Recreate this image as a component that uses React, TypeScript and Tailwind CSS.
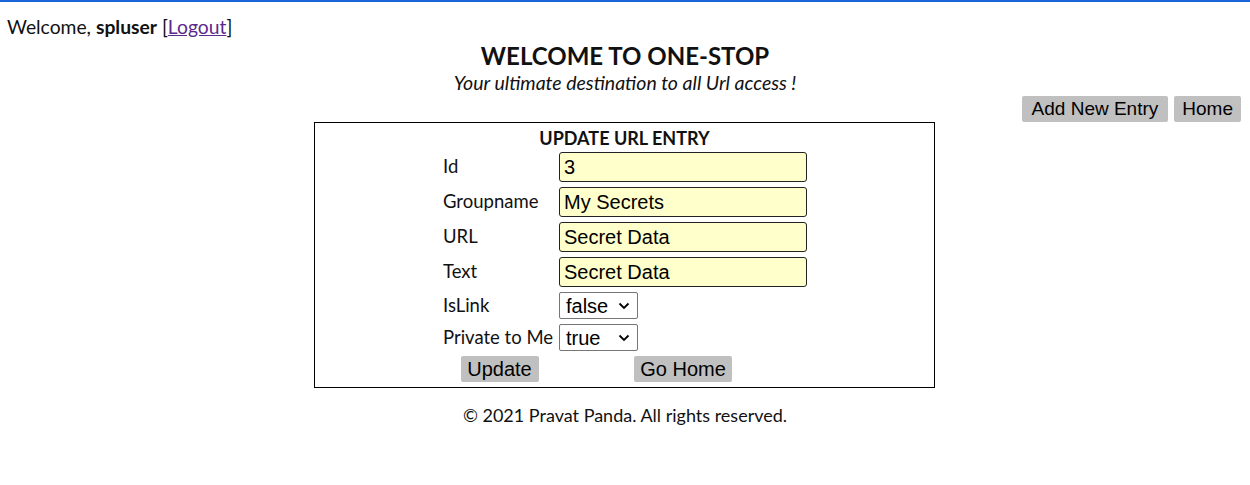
import React from "react";

const body = { fontFamily: "Lato, 'Noto Sans', sans-serif" };

function Chevron() {
  return (
    <svg width="12" height="8" viewBox="0 0 12 8" className="absolute right-[7px] top-1/2 -translate-y-1/2 pointer-events-none">
      <path d="M1.5 1.5 L6 6 L10.5 1.5" fill="none" stroke="#000" strokeWidth="1.8" />
    </svg>
  );
}

function Sel({ value, width }: { value: string; width: string }) {
  return (
    <div className={`relative ${width} h-[27px] border border-[#767676] bg-white rounded-[2px] flex items-center pl-[6px] text-[20px] text-black`} style={{ fontFamily: "'Liberation Sans', Arial, sans-serif" }}>
      {value}
      <Chevron />
    </div>
  );
}

function Inp({ value }: { value: string }) {
  return (
    <div className="w-[248px] h-[30px] border border-[#222] rounded-[3px] bg-[#ffffcc] flex items-center pl-[4px] text-[20px] text-black" style={{ fontFamily: "'Liberation Sans', Arial, sans-serif" }}>
      {value}
    </div>
  );
}

export default function App() {
  const rows: [string, string][] = [
    ["Id", "3"],
    ["Groupname", "My Secrets"],
    ["URL", "Secret Data"],
    ["Text", "Secret Data"],
  ];
  return (
    <div className="w-[1250px] h-[485px] bg-white text-[#111] overflow-hidden" style={body}>
      <div className="h-[2px] bg-[#1a66d9]" />
      <div className="pl-[7px] pt-[14px] text-[19.3px] leading-[22px]">
        Welcome, <b>spluser</b> [<span className="text-[#5c2a8c] underline">Logout</span>]
      </div>
      <div className="text-center font-bold text-[24px] leading-[30px] mt-[3px]">WELCOME TO ONE-STOP</div>
      <div className="text-center italic text-[19.5px] leading-[22px] mt-[1px]">Your ultimate destination to all Url access !</div>
      <div className="flex justify-end gap-[6px] pr-[9px] mt-[2px]" style={{ fontFamily: "'Liberation Sans', Arial, sans-serif" }}>
        <div className="bg-[#c0c0c0] rounded-[2px] h-[26px] px-[10px] flex items-center text-[19px] text-black">Add New Entry</div>
        <div className="bg-[#c0c0c0] rounded-[2px] h-[26px] px-[8px] flex items-center text-[19px] text-black">Home</div>
      </div>
      <div className="w-[621px] ml-[314px] border border-black h-[266px] flex flex-col items-center">
        <div className="font-bold text-[18px] leading-[22px] mt-[4px]">UPDATE URL ENTRY</div>
        <div className="grid grid-cols-[115px_248px] grid-rows-[30px_30px_30px_30px_27px_27px_26px] gap-x-[2px] gap-y-[5px] mt-[3px]">
          {rows.map(([l, v]) => (
            <React.Fragment key={l}>
              <div className="flex items-center pl-[1px] text-[18.5px]">{l}</div>
              <Inp value={v} />
            </React.Fragment>
          ))}
          <div className="flex items-center pl-[1px] text-[18.5px]">IsLink</div>
          <Sel value="false" width="w-[79px]" />
          <div className="flex items-center pl-[1px] text-[18.5px] whitespace-nowrap">Private to Me</div>
          <Sel value="true" width="w-[79px]" />
          <div className="flex justify-center">
            <div className="bg-[#c0c0c0] rounded-[2px] h-[26px] w-[78px] flex items-center justify-center text-[20px] text-black" style={{ fontFamily: "'Liberation Sans', Arial, sans-serif" }}>Update</div>
          </div>
          <div className="flex justify-center">
            <div className="bg-[#c0c0c0] rounded-[2px] h-[26px] w-[98px] flex items-center justify-center text-[20px] text-black" style={{ fontFamily: "'Liberation Sans', Arial, sans-serif" }}>Go Home</div>
          </div>
        </div>
      </div>
      <div className="text-center text-[18px] leading-[22px] mt-[16px]">© 2021 Pravat Panda. All rights reserved.</div>
    </div>
  );
}
